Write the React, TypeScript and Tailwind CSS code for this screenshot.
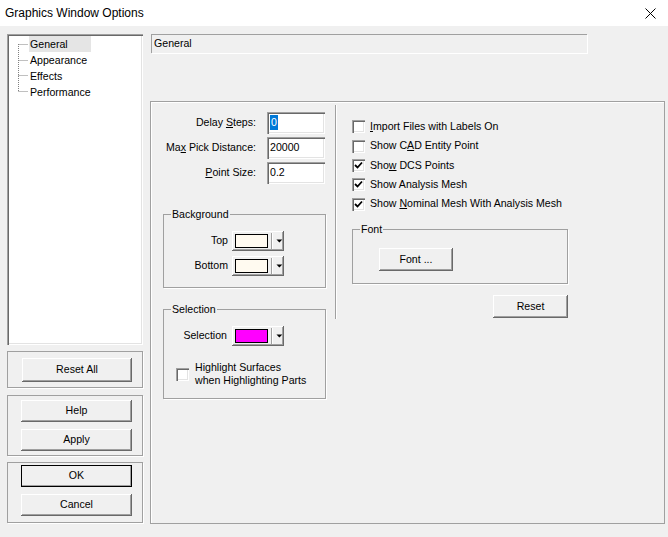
import React from "react";

const btn =
  "flex items-center justify-center bg-[#f0f0f0] shadow-[inset_-1px_-1px_#696969,inset_1px_1px_#ffffff,inset_-2px_-2px_#a0a0a0]";
const sunken =
  "bg-white shadow-[inset_1px_1px_#a0a0a0,inset_2px_2px_#696969,inset_-1px_-1px_#ffffff,inset_-2px_-2px_#e3e3e3]";

function Button({ label, className = "" }: { label: string; className?: string }) {
  return <div className={`${btn} ${className}`}>{label}</div>;
}

function Group({ title, className = "", children }: { title: string; className?: string; children: React.ReactNode }) {
  return (
    <div className={`relative border border-[#a0a0a0] shadow-[1px_1px_#ffffff] ${className}`}>
      <span className="absolute -top-[8px] left-[7px] bg-[#f0f0f0] px-[1px] leading-[14px]">{title}</span>
      {children}
    </div>
  );
}

function Check({ checked, children }: { checked?: boolean; children: React.ReactNode }) {
  return (
    <div className="flex h-[19.4px] items-center gap-[5px]">
      <div className={`${sunken} flex h-[13px] w-[13px] items-center justify-center`}>
        {checked ? (
          <svg width="9" height="9" viewBox="0 0 9 9">
            <path d="M1 4 L3.5 6.5 L8 1.5" stroke="#000" strokeWidth="1.8" fill="none" />
          </svg>
        ) : null}
      </div>
      <span className="whitespace-nowrap">{children}</span>
    </div>
  );
}

function ColorPick({ color }: { color: string }) {
  return (
    <div className={`${btn} h-[20px] w-[52px] justify-start pl-[3px]`}>
      <div className="h-[14px] w-[34px] border border-black" style={{ background: color }} />
      <div className="ml-[3px] h-[16px] w-[1px] bg-[#a0a0a0] shadow-[1px_0_#ffffff]" />
      <svg width="9" height="6" viewBox="0 0 9 6" className="ml-[3px]">
        <path d="M1.5 1.5 H7.5 L4.5 4.5 Z" fill="#000" />
      </svg>
    </div>
  );
}

function Field({ label, value, selected }: { label: React.ReactNode; value: string; selected?: boolean }) {
  return (
    <div className="flex h-[21px] items-center justify-end gap-[11px]">
      <span className="whitespace-nowrap">{label}</span>
      <div className={`${sunken} flex h-[22px] w-[58px] shrink-0 items-center pl-[3px]`}>
        {selected ? <span className="bg-[#0078d7] px-[1px] text-white">{value}</span> : <span>{value}</span>}
      </div>
    </div>
  );
}

export default function App() {
  return (
    <div className="h-[537px] w-[668px] overflow-hidden bg-[#f0f0f0] text-[10.6px] text-black [font-family:'Liberation_Sans',Arial,sans-serif]">
      <div className="flex h-[26px] items-center justify-between bg-white pl-[5px] pr-[12px]">
        <span className="text-[12px]">Graphics Window Options</span>
        <svg width="11" height="11" viewBox="0 0 11 11">
          <path d="M0.5 0.5 L10.5 10.5 M10.5 0.5 L0.5 10.5" stroke="#000" strokeWidth="1" />
        </svg>
      </div>

      <div className="flex">
        <div className="ml-[7px] w-[136px]">
          <div className={`${sunken} mt-[8px] h-[311px] pl-[11px] pt-[2px]`}>
            <div className="flex">
              <svg width="11" height="62" viewBox="0 0 11 62" className="mt-[1px]">
                <path
                  d="M0.5 7 V55 M0.5 7.5 H10 M0.5 23.5 H10 M0.5 38.5 H10 M0.5 54.5 H10"
                  stroke="#808080"
                  strokeWidth="1"
                  strokeDasharray="1 1"
                  fill="none"
                />
              </svg>
              <div className="leading-[16px]">
                <div className="bg-[#e5e5e5] pl-[1px] pr-[2px]">General</div>
                <div className="pl-[1px]">Appearance</div>
                <div className="pl-[1px]">Effects</div>
                <div className="pl-[1px]">Performance</div>
              </div>
            </div>
          </div>
          <div className="mt-[6px] flex h-[37px] items-center border border-[#a0a0a0] shadow-[1px_1px_#ffffff] pl-[14px]">
            <Button label="Reset All" className="h-[24px] w-[110px]" />
          </div>
          <div className="mt-[7px] flex h-[61px] flex-col gap-[7px] border border-[#a0a0a0] shadow-[1px_1px_#ffffff] pl-[13px] pt-[4px]">
            <Button label="Help" className="h-[22px] w-[111px]" />
            <Button label="Apply" className="h-[22px] w-[111px]" />
          </div>
          <div className="mt-[6px] flex h-[61px] flex-col gap-[7px] border border-[#a0a0a0] shadow-[1px_1px_#ffffff] pl-[13px] pt-[2px]">
            <Button label="OK" className="h-[22px] w-[111px] outline outline-1 -outline-offset-1 outline-black" />
            <Button label="Cancel" className="h-[22px] w-[111px]" />
          </div>
        </div>

        <div className="ml-[7px] flex-1">
          <div className="mt-[8px] ml-[1px] flex h-[19px] w-[436px] items-center border-l border-t border-[#a0a0a0] pl-[2px] shadow-[1px_1px_#ffffff]">
            General
          </div>

          <div className="mt-[48px] flex h-[423px] w-[515px] border border-[#a0a0a0] shadow-[inset_1px_1px_#ffffff]">
            <div className="w-[184px] shrink-0 pl-[12px] pt-[10px]">
              <div className="flex w-[162px] flex-col gap-[4px]">
                <Field label={<>Delay <u>S</u>teps:</>} value="0" selected />
                <Field label={<>Ma<u>x</u> Pick Distance:</>} value="20000" />
                <Field label={<><u>P</u>oint Size:</>} value="0.2" />
              </div>

              <Group title="Background" className="mt-[31px] h-[74px] w-[163px]">
                <div className="flex flex-col gap-[5px] pt-[16px]">
                  <div className="flex items-center">
                    <span className="w-[64px] text-right">Top</span>
                    <span className="ml-[4px]"><ColorPick color="#fffaf0" /></span>
                  </div>
                  <div className="flex items-center">
                    <span className="w-[64px] text-right">Bottom</span>
                    <span className="ml-[4px]"><ColorPick color="#fffaf0" /></span>
                  </div>
                </div>
              </Group>

              <Group title="Selection" className="mt-[21px] h-[90px] w-[163px]">
                <div className="flex items-center pt-[16px]">
                  <span className="w-[63px] text-right">Selection</span>
                  <span className="ml-[5px]"><ColorPick color="#ff00ff" /></span>
                </div>
                <div className="mt-[15px] flex items-center pl-[12px]">
                  <div className={`${sunken} h-[13px] w-[13px]`} />
                  <div className="ml-[6px] leading-[13px]">
                    <div>Highlight Surfaces</div>
                    <div>when Highlighting Parts</div>
                  </div>
                </div>
              </Group>
            </div>

            <div className="mt-[3px] h-[214px] w-[1px] bg-[#a0a0a0] shadow-[1px_0_#ffffff]" />

            <div className="pl-[16px] pt-[15px]">
              <Check><u>I</u>mport Files with Labels On</Check>
              <Check>Show C<u>A</u>D Entity Point</Check>
              <Check checked>Sho<u>w</u> DCS Points</Check>
              <Check checked>Show Analysis Mesh</Check>
              <Check checked>Show <u>N</u>ominal Mesh With Analysis Mesh</Check>

              <Group title="Font" className="mt-[15px] h-[55px] w-[216px]">
                <div className="pl-[26px] pt-[18px]">
                  <Button label="Font ..." className="h-[23px] w-[74px]" />
                </div>
              </Group>

              <div className="mt-[11px] flex w-[216px] justify-end">
                <Button label="Reset" className="h-[23px] w-[75px]" />
              </div>
            </div>
          </div>
        </div>
      </div>
    </div>
  );
}
